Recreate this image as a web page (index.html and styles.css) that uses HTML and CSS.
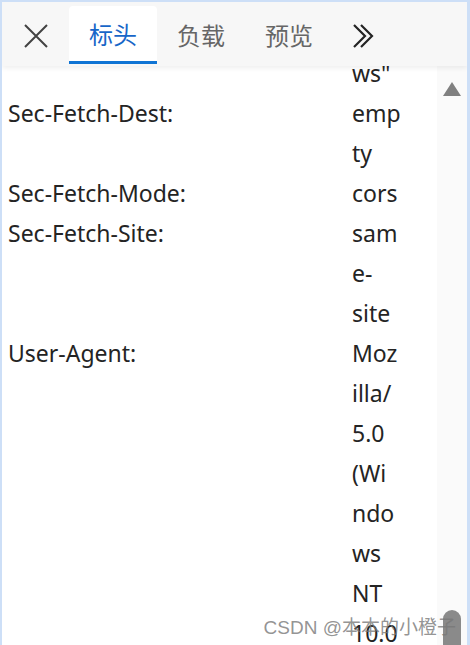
FILE: index.html
```
<!DOCTYPE html>
<html lang="zh">
<head>
<meta charset="utf-8">
<link rel="stylesheet" href="styles.css">
</head>
<body>
<div class="frame">
  <header class="bar">
    <button class="close" aria-label="关闭">
      <svg width="24" height="24" viewBox="0 0 24 24"><path d="M1 1L23 23M23 1L1 23" stroke="#424242" stroke-width="2" fill="none"/></svg>
    </button>
    <nav class="tabs">
      <span class="tab active">标头</span>
      <span class="tab">负载</span>
      <span class="tab">预览</span>
    </nav>
    <button class="more" aria-label="更多">
      <svg width="22" height="24" viewBox="0 0 22 24"><path d="M1 1L12 12L1 23M8 1L19 12L8 23" stroke="#242424" stroke-width="2.2" fill="none"/></svg>
    </button>
  </header>
  <div class="body">
    <div class="content">
      <div class="list">
        <div class="row"><span class="name"></span><span class="value"><span>ws"</span></span></div>
        <div class="row"><span class="name">Sec-Fetch-Dest:</span><span class="value"><span>emp</span><span>ty</span></span></div>
        <div class="row"><span class="name">Sec-Fetch-Mode:</span><span class="value"><span>cors</span></span></div>
        <div class="row"><span class="name">Sec-Fetch-Site:</span><span class="value"><span>sam</span><span>e-</span><span>site</span></span></div>
        <div class="row"><span class="name">User-Agent:</span><span class="value"><span>Moz</span><span>illa/</span><span>5.0</span><span>(Wi</span><span>ndo</span><span>ws</span><span>NT</span><span>10.0</span></span></div>
      </div>
    </div>
    <div class="scrollbar">
      <span class="arrow"></span>
      <span class="track"></span>
      <span class="thumb"></span>
    </div>
  </div>
  <div class="watermark">CSDN @本本的小橙子</div>
</div>
</body>
</html>
```
FILE: styles.css
```
html, body {
  margin: 0;
  padding: 0;
}
body {
  background: #cddff7;
  width: 470px;
  height: 645px;
  overflow: hidden;
}
.frame {
  position: relative;
  margin: 2px 3px 0 2px;
  height: 643px;
  background: #ffffff;
  overflow: hidden;
  display: flex;
  flex-direction: column;
  font-family: "Noto Sans", "Noto Sans CJK SC", sans-serif;
  color: #242424;
}
.bar {
  position: relative;
  z-index: 2;
  height: 64px;
  flex: none;
  background: #f7f7f7;
  box-shadow: 0 2px 5px rgba(0, 0, 0, 0.07);
  display: flex;
  align-items: flex-end;
}
.close, .more {
  border: 0;
  background: none;
  padding: 0;
  display: flex;
  align-items: center;
  justify-content: center;
}
.close {
  width: 67px;
  height: 64px;
  padding-top: 4px;
}
.more {
  width: 22px;
  height: 64px;
  margin-left: 20px;
  padding-top: 4px;
}
.tabs {
  display: flex;
  align-items: flex-end;
  margin-bottom: 2px;
}
.tab {
  width: 88px;
  height: 58px;
  box-sizing: border-box;
  display: flex;
  align-items: center;
  justify-content: center;
  font-family: "Noto Sans CJK SC", sans-serif;
  font-size: 24px;
  color: #666666;
  padding-bottom: 2px;
  border-radius: 4px 4px 0 0;
}
.tab.active {
  background: #ffffff;
  color: #1766c8;
  border-bottom: 3px solid #0f74d4;
  padding-bottom: 0;
}
.body {
  flex: 1;
  display: flex;
  min-height: 0;
}
.content {
  flex: 1;
  overflow: hidden;
}
.list {
  margin-top: -13px;
  padding-left: 6px;
  font-size: 23px;
  line-height: 40px;
}
.row {
  display: grid;
  grid-template-columns: 344px 1fr;
}
.value {
  display: flex;
  flex-direction: column;
}
.scrollbar {
  width: 30px;
  flex: none;
  background: #fafafa;
  display: flex;
  flex-direction: column;
  align-items: flex-start;
}
.arrow {
  margin: 16px 0 0 6px;
  width: 0;
  height: 0;
  border-left: 9px solid transparent;
  border-right: 9px solid transparent;
  border-bottom: 14px solid #808080;
}
.track {
  flex: 1;
}
.thumb {
  margin: 0 0 -8px 6px;
  width: 18px;
  height: 43px;
  border-radius: 9px;
  background: #8a8a8a;
}
.watermark {
  position: absolute;
  right: 11px;
  bottom: 5px;
  z-index: 3;
  font-family: "Liberation Sans", "Noto Sans CJK SC", sans-serif;
  font-size: 19px;
  line-height: 24px;
  color: rgba(120, 120, 120, 0.8);
  white-space: nowrap;
}
```
